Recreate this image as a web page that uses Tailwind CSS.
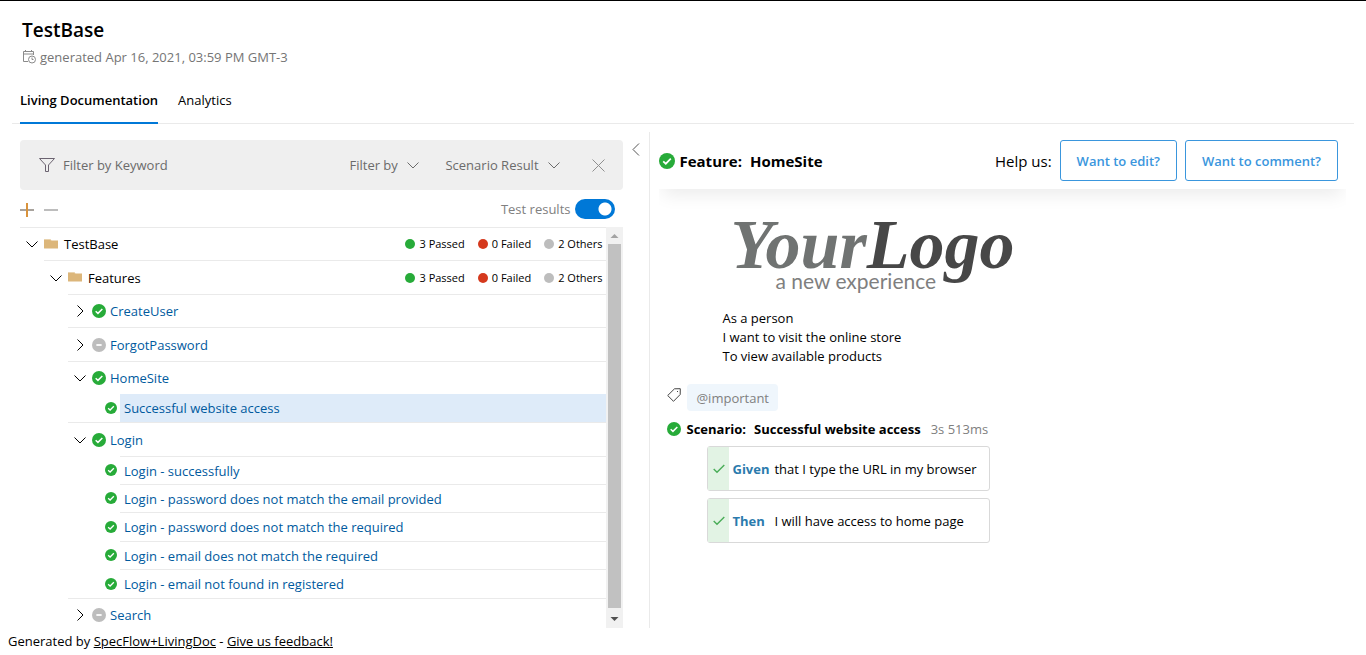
<!DOCTYPE html>
<html lang="en">
<head>
<meta charset="utf-8">
<meta name="viewport" content="width=device-width, initial-scale=1">
<title>TestBase</title>
<script src="https://cdn.jsdelivr.net/npm/@tailwindcss/browser@4"></script>
</head>
<body class="border-t border-black bg-white font-['Open_Sans','Noto_Sans',sans-serif] text-[13px] leading-5 text-black">

<svg class="hidden" aria-hidden="true">
  <symbol id="pass" viewBox="0 0 16 16"><circle cx="8" cy="8" r="8" fill="#27ab39"/><path d="M4.2 8.3l2.6 2.4 5-5" fill="none" stroke="#fff" stroke-width="1.7"/></symbol>
  <symbol id="other" viewBox="0 0 16 16"><circle cx="8" cy="8" r="8" fill="#bdbdbd"/><path d="M5 8h6" fill="none" stroke="#fff" stroke-width="2"/></symbol>
  <symbol id="down" viewBox="0 0 12 12"><path d="M.5 3.5L6 9l5.500-5.500" fill="none" stroke="currentColor"/></symbol>
  <symbol id="right" viewBox="0 0 12 12"><path d="M3.500.5L9 6l-5.500 5.500" fill="none" stroke="currentColor"/></symbol>
  <symbol id="folder" viewBox="0 0 14 11"><path d="M0 .5Q0 0 .5 0H6l1.500 1.500H14V9.500H.5Q0 9.500 0 9z" fill="#dcb67a"/><path d="M0 .5h6l1 1" fill="none" stroke="#e9d3ae"/></symbol>
  <symbol id="tick" viewBox="0 0 12 12"><path d="M.7 6l3.300 3.300L11.300 2" fill="none" stroke="#4aad58" stroke-width="1.400"/></symbol>
</svg>

<header>
  <div class="px-[22px] pt-[17px]">
    <h1 class="text-[19px] leading-6 font-semibold">TestBase</h1>
    <p class="mt-[5px] flex items-center gap-1 text-[#757575]">
      <svg class="size-[14px]" viewBox="0 0 14 14" fill="none" stroke="#8a8a8a"><path d="M6 11.500H1.500V1.500h10V5M1.500 4h10M3.500 0v2M9.500 0v2"/><circle cx="10" cy="9.500" r="3.500"/><path d="M10 7.500v2h1.500"/></svg>
      generated Apr 16, 2021, 03:59 PM GMT-3
    </p>
  </div>
  <nav class="mx-3 mt-5 flex gap-5 border-b border-[#eaeaea] px-2">
    <a href="#living" class="-mb-px border-b-2 border-[#0078d7] pt-[3px] pb-3 font-semibold">Living Documentation</a>
    <a href="#analytics" class="pt-[3px] pb-3">Analytics</a>
  </nav>
</header>

<main class="grid grid-cols-[minmax(0,10fr)_minmax(0,11fr)] pt-2">
  <section class="flex gap-[9px] border-r border-[#eaeaea] pl-5">
    <div class="min-w-0 flex-1 pt-2">
      <form class="flex h-[50px] items-center rounded bg-[#efefef] pr-[18px] pl-[19px] text-[#6b6b6b]">
        <svg class="size-4 shrink-0" viewBox="0 0 16 16" fill="none" stroke="#6b6370"><path d="M.5 1.500h15L9.500 8v6.500h-3V8z"/></svg>
        <input aria-label="Filter by Keyword" placeholder="Filter by Keyword" class="ml-2 min-w-0 flex-1 bg-transparent outline-none placeholder:text-[#6b6b6b]">
        <label class="flex items-center gap-[9px]"><select aria-label="Filter by" class="appearance-none bg-transparent outline-none"><option>Filter by</option></select><svg class="size-3"><use href="#down"/></svg></label>
        <label class="ml-[26px] flex items-center gap-[9px]"><select aria-label="Scenario Result" class="appearance-none bg-transparent outline-none"><option>Scenario Result</option></select><svg class="size-3"><use href="#down"/></svg></label>
        <button type="button" aria-label="Clear filter" class="ml-8"><svg class="size-[13px]" viewBox="0 0 13 13" stroke="#8f8f8f"><path d="M.5.5l12 12M12.500.5l-12 12"/></svg></button>
      </form>
      <div class="flex h-[37px] items-center gap-[10px] pr-2">
        <button type="button" aria-label="Expand all" class="mt-[2px]"><svg class="size-[14px]" viewBox="0 0 14 14"><path d="M0 7h14" stroke="#a8a39d" stroke-width="2"/><path d="M7 0v14" stroke="#d9933c" stroke-width="2"/></svg></button>
        <button type="button" aria-label="Collapse all" class="mt-[2px]"><svg class="size-[14px]" viewBox="0 0 14 14"><path d="M0 7h14" stroke="#bdbdbd" stroke-width="2"/></svg></button>
        <label class="ml-auto flex items-center gap-[5px] text-[#808080]">Test results
          <input type="checkbox" role="switch" checked class="h-5 w-10 appearance-none rounded-full bg-[#0078d7] bg-[radial-gradient(circle_at_30px_10px,white_6px,transparent_7px)]">
        </label>
      </div>
      <div class="flex">
        <ul class="min-w-0 flex-1">
          <li>
            <div class="flex h-[33px] items-center border-t border-[#eaeaea] pl-[6px]">
              <svg class="size-3"><use href="#down"/></svg><svg class="ml-[6px] h-[11px] w-[14px]"><use href="#folder"/></svg><span class="ml-[6px]">TestBase</span>
              <div class="ml-auto flex gap-[13px] pr-1 text-[11px]"><span class="flex items-center gap-1"><i class="size-[10px] rounded-full bg-[#27ab39]"></i>3 Passed</span><span class="flex items-center gap-1"><i class="size-[10px] rounded-full bg-[#d5391d]"></i>0 Failed</span><span class="flex items-center gap-1"><i class="size-[10px] rounded-full bg-[#bdbdbd]"></i>2 Others</span></div>
            </div>
            <ul class="pl-6">
              <li>
                <div class="flex h-[34px] items-center border-t border-[#eaeaea] pl-[6px]">
                  <svg class="size-3"><use href="#down"/></svg><svg class="ml-[6px] h-[11px] w-[14px]"><use href="#folder"/></svg><span class="ml-[6px]">Features</span>
                  <div class="ml-auto flex gap-[13px] pr-1 text-[11px]"><span class="flex items-center gap-1"><i class="size-[10px] rounded-full bg-[#27ab39]"></i>3 Passed</span><span class="flex items-center gap-1"><i class="size-[10px] rounded-full bg-[#d5391d]"></i>0 Failed</span><span class="flex items-center gap-1"><i class="size-[10px] rounded-full bg-[#bdbdbd]"></i>2 Others</span></div>
                </div>
                <ul class="pl-6">
                  <li class="flex h-[33px] items-center border-t border-[#eaeaea] pl-[6px]"><svg class="size-3"><use href="#right"/></svg><svg class="ml-[6px] size-[14px]"><use href="#pass"/></svg><a href="#createuser" class="ml-1 text-[#005a9e]">CreateUser</a></li>
                  <li class="flex h-[34px] items-center border-t border-[#eaeaea] pl-[6px]"><svg class="size-3"><use href="#right"/></svg><svg class="ml-[6px] size-[14px]"><use href="#other"/></svg><a href="#forgotpassword" class="ml-1 text-[#005a9e]">ForgotPassword</a></li>
                  <li>
                    <div class="flex h-[33px] items-center border-t border-[#eaeaea] pl-[6px]"><svg class="size-3"><use href="#down"/></svg><svg class="ml-[6px] size-[14px]"><use href="#pass"/></svg><a href="#homesite" class="ml-1 text-[#005a9e]">HomeSite</a></div>
                    <ul class="pl-[37px]">
                      <li class="flex h-7 items-center gap-[3px]"><svg class="size-3"><use href="#pass"/></svg><a href="#s1" class="flex h-full flex-1 items-center bg-[#deebf9] pl-1 text-[#005a9e]">Successful website access</a></li>
                    </ul>
                  </li>
                  <li>
                    <div class="flex h-[34px] items-center border-t border-[#eaeaea] pl-[6px]"><svg class="size-3"><use href="#down"/></svg><svg class="ml-[6px] size-[14px]"><use href="#pass"/></svg><a href="#login" class="ml-1 text-[#005a9e]">Login</a></div>
                    <ul class="pl-[37px]">
                      <li class="flex h-7 items-center gap-[3px]"><svg class="size-3"><use href="#pass"/></svg><a href="#s2" class="flex h-full flex-1 items-center border-t border-[#eaeaea] pl-1 text-[#005a9e]">Login - successfully</a></li>
                      <li class="flex h-7 items-center gap-[3px]"><svg class="size-3"><use href="#pass"/></svg><a href="#s3" class="flex h-full flex-1 items-center border-t border-[#eaeaea] pl-1 text-[#005a9e]">Login - password does not match the email provided</a></li>
                      <li class="flex h-[29px] items-center gap-[3px]"><svg class="size-3"><use href="#pass"/></svg><a href="#s4" class="flex h-full flex-1 items-center border-t border-[#eaeaea] pl-1 text-[#005a9e]">Login - password does not match the required</a></li>
                      <li class="flex h-7 items-center gap-[3px]"><svg class="size-3"><use href="#pass"/></svg><a href="#s5" class="flex h-full flex-1 items-center border-t border-[#eaeaea] pl-1 text-[#005a9e]">Login - email does not match the required</a></li>
                      <li class="flex h-[29px] items-center gap-[3px]"><svg class="size-3"><use href="#pass"/></svg><a href="#s6" class="flex h-full flex-1 items-center border-t border-[#eaeaea] pl-1 text-[#005a9e]">Login - email not found in registered</a></li>
                    </ul>
                  </li>
                  <li class="flex h-[30px] items-center border-t border-[#eaeaea] pt-[2px] pl-[6px]"><svg class="size-3"><use href="#right"/></svg><svg class="ml-[6px] size-[14px]"><use href="#other"/></svg><a href="#search" class="ml-1 text-[#005a9e]">Search</a></li>
                </ul>
              </li>
            </ul>
          </li>
        </ul>
        <div class="flex w-[17px] flex-col items-center bg-[#f1f1f1]" aria-hidden="true">
          <svg class="h-[17px] w-[9px]" viewBox="0 0 9 17"><path d="M.5 11h8l-4-4z" fill="#a3a3a3"/></svg>
          <div class="w-[13px] flex-1 bg-[#c1c1c1]"></div>
          <svg class="h-5 w-[9px]" viewBox="0 0 9 20"><path d="M.5 9h8l-4 4z" fill="#505050"/></svg>
        </div>
      </div>
    </div>
    <button type="button" aria-label="Collapse panel" class="mt-[11px] mr-[9px] self-start"><svg class="h-[13px] w-2" viewBox="0 0 8 13" fill="none" stroke="#555"><path d="M7 .5l-6 6 6 6"/></svg></button>
  </section>

  <section class="pr-5 pl-[9px]">
    <div class="overflow-hidden pb-6">
      <div class="flex h-[57px] items-center pr-2 shadow-[0_10px_18px_-4px_rgba(0,0,0,0.08)]">
        <svg class="size-4"><use href="#pass"/></svg>
        <h2 class="ml-1 flex gap-2 text-[15px] font-bold"><span>Feature:</span><span>HomeSite</span></h2>
        <span class="mr-2 ml-auto text-[15px]">Help us:</span>
        <button type="button" class="mr-2 h-[41px] rounded-[3px] border border-[#3a96dd] px-4 font-semibold text-[#3a96dd]">Want to edit?</button>
        <button type="button" class="h-[41px] rounded-[3px] border border-[#3a96dd] px-4 font-semibold text-[#3a96dd]">Want to comment?</button>
      </div>
    </div>
    <div class="pl-[63px]">
      <div class="flex h-24 flex-col pl-2" role="img" aria-label="YourLogo, a new experience">
        <span class="font-['Liberation_Serif',serif] text-[70px] leading-[64px] font-bold text-[#474747] italic"><span class="text-[#707372]">Your</span>Logo</span>
        <span class="-mt-2 pl-[45px] font-[Lato,sans-serif] text-[21px] leading-6 text-[#7f7f7f]">a new experience</span>
      </div>
      <p class="leading-[19px]">As a person<br>I want to visit the online store<br>To view available products</p>
    </div>
    <div class="mt-[18px] flex gap-[6px] pl-2">
      <svg class="mt-1 size-[14px]" viewBox="0 0 14 14" fill="none" stroke="#444"><path d="M.7 7.500L7.500.8l5.800-.1-.1 5.800-6.700 6.800z"/><path d="M10.500 3v1"/></svg>
      <span class="rounded bg-[#eff6fc] px-[9px] pt-1 pb-[3px] text-[#808080]">@important</span>
    </div>
    <div class="pl-2">
      <h3 class="mt-2 flex items-center font-bold"><svg class="mr-[5px] size-[14px]"><use href="#pass"/></svg><span>Scenario:</span><span class="ml-2">Successful website access</span><span class="ml-[10px] font-normal text-[#808080]">3s 513ms</span></h3>
      <ol class="mt-[7px] ml-10 grid w-[283px] gap-[7px]">
        <li class="flex h-[45px] items-center rounded-[3px] border border-[#d9d9d9] whitespace-nowrap"><span class="flex h-full w-[21px] items-center justify-center bg-[#e2f3e4]"><svg class="size-3"><use href="#tick"/></svg></span><b class="ml-[3px] w-[42px] text-[#2b7bad]">Given</b>that I type the URL in my browser</li>
        <li class="flex h-[45px] items-center rounded-[3px] border border-[#d9d9d9] whitespace-nowrap"><span class="flex h-full w-[21px] items-center justify-center bg-[#e2f3e4]"><svg class="size-3"><use href="#tick"/></svg></span><b class="ml-[3px] w-[42px] text-[#2b7bad]">Then</b>I will have access to home page</li>
      </ol>
    </div>
  </section>
</main>

<footer class="px-2 pt-[3px]">Generated by <a href="#specflow" class="underline">SpecFlow+LivingDoc</a> - <a href="#feedback" class="underline">Give us feedback!</a></footer>
</body>
</html>
